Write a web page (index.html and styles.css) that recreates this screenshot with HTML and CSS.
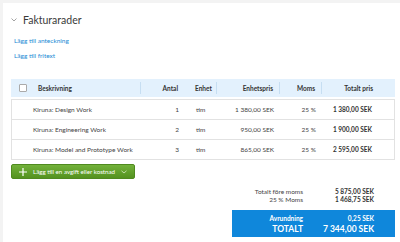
FILE: index.html
```html
<!DOCTYPE html>
<html lang="sv">
<head>
    <meta charset="UTF-8">
    <title>Fakturarader</title>
    <link rel="stylesheet" href="styles.css">
</head>
<body>
    <div class="card">
        <div class="section-head">
            <svg class="chevron" width="6" height="4" viewBox="0 0 6 4"><path d="M0.5 0.5 L3 3 L5.5 0.5" fill="none" stroke="#999" stroke-width="0.9"/></svg>
            <h2>Fakturarader</h2>
        </div>

        <a class="link" href="#">Lägg till anteckning</a>
        <a class="link" href="#">Lägg till fritext</a>

        <div class="rows-table">
            <div class="row head">
                <div class="cell check"><span class="checkbox"></span></div>
                <div class="cell desc sep">Beskrivning</div>
                <div class="cell num">Antal</div>
                <div class="cell unit sep">Enhet</div>
                <div class="cell num sep">Enhetspris</div>
                <div class="cell num sep">Moms</div>
                <div class="cell num total">Totalt pris</div>
            </div>
            <div class="row">
                <div class="cell check"></div>
                <div class="cell desc">Kiruna: Design Work</div>
                <div class="cell num">1</div>
                <div class="cell unit">tim</div>
                <div class="cell num">1 380,00 SEK</div>
                <div class="cell num">25 %</div>
                <div class="cell num total strong">1 380,00 SEK</div>
            </div>
            <div class="row">
                <div class="cell check"></div>
                <div class="cell desc">Kiruna: Engineering Work</div>
                <div class="cell num">2</div>
                <div class="cell unit">tim</div>
                <div class="cell num">950,00 SEK</div>
                <div class="cell num">25 %</div>
                <div class="cell num total strong">1 900,00 SEK</div>
            </div>
            <div class="row">
                <div class="cell check"></div>
                <div class="cell desc">Kiruna: Model and Prototype Work</div>
                <div class="cell num">3</div>
                <div class="cell unit">tim</div>
                <div class="cell num">865,00 SEK</div>
                <div class="cell num">25 %</div>
                <div class="cell num total strong">2 595,00 SEK</div>
            </div>
        </div>

        <button class="add-btn">
            <svg width="8" height="8" viewBox="0 0 8 8"><path d="M4 0 V8 M0 4 H8" stroke="#fff" stroke-width="1.2"/></svg>
            <span>Lägg till en avgift eller kostnad</span>
            <svg width="6" height="4" viewBox="0 0 6 4"><path d="M0.5 0.8 L3 3 L5.5 0.8" fill="none" stroke="#d8ecc4" stroke-width="0.8"/></svg>
        </button>

        <div class="summary">
            <div class="sum-line"><span class="sum-label">Totalt före moms</span><span class="sum-value">5 875,00 SEK</span></div>
            <div class="sum-line"><span class="sum-label">25 % Moms</span><span class="sum-value">1 468,75 SEK</span></div>
            <div class="total-box">
                <div class="sum-line"><span class="sum-label">Avrundning</span><span class="sum-value">0,25 SEK</span></div>
                <div class="sum-line big"><span class="sum-label">TOTALT</span><span class="sum-value">7 344,00 SEK</span></div>
            </div>
        </div>
    </div>
</body>
</html>
```

FILE: styles.css
```css
body {
    margin: 0;
    background-color: #f3f3f3;
    font-family: Lato, sans-serif;
    color: #444;
}
.card {
    margin: 3px 0 0 3px;
    padding: 7px 5px 20px 8px;
    background-color: #fff;
    min-height: 240px;
}
.section-head {
    display: flex;
    align-items: center;
    height: 19px;
}
.chevron {
    margin-right: 6px;
}
.section-head h2 {
    margin: 0;
    font-size: 10.5px;
    font-weight: 400;
    color: #3a3a3a;
}
.link {
    display: block;
    margin-left: 3px;
    font-size: 6.5px;
    color: #1a8ad4;
    text-decoration: none;
}
.section-head + .link {
    margin-top: 8px;
}
.link + .link {
    margin-top: 8px;
}
.rows-table {
    margin-top: 20px;
    font-size: 6.5px;
}
.row {
    display: grid;
    grid-template-columns: 19px 111px 44px 32px 63px 42px 69px;
    height: 19px;
    align-items: center;
    border: 1px solid #e2e2e2;
    border-top: none;
}
.row.head {
    height: 18px;
    background-color: #e3f1fd;
    border: none;
    margin-bottom: 2px;
    font-weight: 700;
    color: #333;
}
.row.head + .row {
    border-top: 1px solid #e2e2e2;
}
.cell {
    white-space: nowrap;
    height: 100%;
    display: flex;
    align-items: center;
}
.cell.sep {
    position: relative;
}
.cell.sep::after {
    content: "";
    position: absolute;
    right: 0;
    top: 3px;
    bottom: 3px;
    border-right: 1px solid #c6def2;
}
.checkbox {
    display: block;
    width: 6px;
    height: 6px;
    margin-left: 8px;
    border: 1px solid #aaa;
    border-radius: 1px;
    background-color: #fff;
}
.head .desc {
    padding-left: 8px;
}
.desc {
    padding-left: 2px;
}
.num {
    justify-content: flex-end;
    padding-right: 7px;
}
.unit {
    padding-left: 10px;
}
.num.total {
    padding-right: 20px;
}
.head .num.total {
    padding-right: 18px;
}
.strong {
    font-weight: 700;
    color: #333;
}
.add-btn {
    display: flex;
    align-items: center;
    gap: 6px;
    margin-top: 4px;
    width: 124px;
    height: 15px;
    padding: 0 0 0 7px;
    border: 1px solid #4f8a1f;
    border-radius: 2px;
    background: linear-gradient(#72b13a, #54921f);
    color: #fff;
    font-family: Lato, sans-serif;
    font-size: 6.2px;
    white-space: nowrap;
    cursor: pointer;
}
.summary {
    width: 163px;
    margin: 8px 0 0 221px;
    font-size: 6.5px;
}
.sum-line {
    display: flex;
    justify-content: flex-end;
    height: 8px;
    align-items: center;
}
.sum-label {
    text-align: right;
}
.sum-value {
    width: 71px;
    text-align: right;
    padding-right: 21px;
    font-weight: 700;
    color: #333;
}
.total-box {
    margin-top: 7px;
    padding: 3px 0 2px;
    background-color: #0f87db;
    color: #fff;
    font-weight: 700;
}
.total-box .sum-value {
    color: #fff;
}
.total-box .sum-line {
    height: 10px;
}
.total-box .sum-line.big {
    height: 12px;
    font-size: 8.5px;
}
```
